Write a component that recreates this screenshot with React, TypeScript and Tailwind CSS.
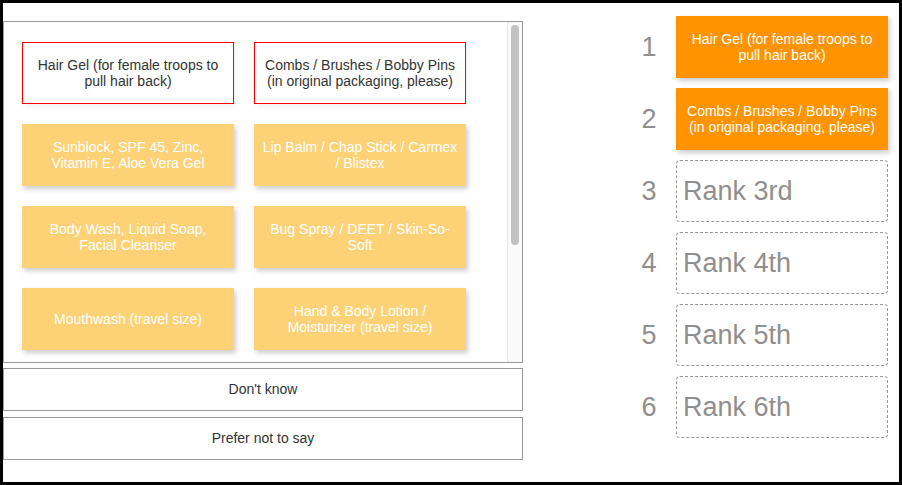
import React from "react";

const leftCards: { text: string; placed?: boolean }[] = [
  { text: "Hair Gel (for female troops to pull hair back)", placed: true },
  { text: "Combs / Brushes / Bobby Pins (in original packaging, please)", placed: true },
  { text: "Sunblock, SPF 45, Zinc, Vitamin E, Aloe Vera Gel" },
  { text: "Lip Balm / Chap Stick / Carmex / Blistex" },
  { text: "Body Wash, Liquid Soap, Facial Cleanser" },
  { text: "Bug Spray / DEET / Skin-So-Soft" },
  { text: "Mouthwash (travel size)" },
  { text: "Hand & Body Lotion / Moisturizer (travel size)" },
];

const ranks: { n: number; text: string; filled?: boolean }[] = [
  { n: 1, text: "Hair Gel (for female troops to pull hair back)", filled: true },
  { n: 2, text: "Combs / Brushes / Bobby Pins (in original packaging, please)", filled: true },
  { n: 3, text: "Rank 3rd" },
  { n: 4, text: "Rank 4th" },
  { n: 5, text: "Rank 5th" },
  { n: 6, text: "Rank 6th" },
];

export default function App() {
  return (
    <div
      className="w-[902px] h-[485px] border-[3px] border-black bg-white flex overflow-hidden"
      style={{ fontFamily: '"Liberation Sans", Arial, Helvetica, sans-serif' }}
    >
      {/* Left column */}
      <div className="w-[520px] shrink-0 pt-[18px] flex flex-col">
        <div className="h-[342px] border border-[#999] flex overflow-hidden">
          <div className="flex-1 overflow-hidden pl-[18px] pt-[20px]">
            <div className="grid grid-cols-[212px_212px] gap-x-[20px] gap-y-[20px]">
              {leftCards.map((c, i) =>
                c.placed ? (
                  <div
                    key={i}
                    className="h-[62px] border border-[#f00] bg-white text-[#333] text-[14px] leading-[16px] flex items-center justify-center text-center px-[8px] shadow-[2px_3px_5px_rgba(0,0,0,0.05)]"
                  >
                    {c.text}
                  </div>
                ) : (
                  <div
                    key={i}
                    className="h-[62px] bg-[#fdd276] text-white text-[14px] leading-[16px] flex items-center justify-center text-center px-[8px] shadow-[2px_3px_5px_rgba(0,0,0,0.2)]"
                  >
                    {c.text}
                  </div>
                )
              )}
            </div>
          </div>
          <div className="w-[15px] shrink-0 border-l border-[#e6e6e6] bg-[#fafafa]">
            <div className="ml-[3px] mt-[3px] w-[8px] h-[220px] rounded-[4px] bg-[#c2c2c2]" />
          </div>
        </div>
        <div className="mt-[5px] h-[43px] border border-[#999] flex items-center justify-center text-[14px] text-[#333]">
          Don't know
        </div>
        <div className="mt-[6px] h-[43px] border border-[#999] flex items-center justify-center text-[14px] text-[#333]">
          Prefer not to say
        </div>
      </div>

      {/* Right column */}
      <div className="ml-auto pr-[11px] pt-[13px] flex flex-col gap-[10px]">
        {ranks.map((r) => (
          <div key={r.n} className="flex items-center h-[62px]">
            <div className="w-[40px] text-center text-[27px] leading-none text-[#8f8f8f]">{r.n}</div>
            <div className="ml-[7px]">
              {r.filled ? (
                <div className="w-[212px] h-[62px] bg-[#ff9400] text-white text-[14px] leading-[16px] flex items-center justify-center text-center px-[8px] shadow-[2px_3px_5px_rgba(0,0,0,0.2)]">
                  {r.text}
                </div>
              ) : (
                <div className="w-[212px] h-[62px] border border-dashed border-[#9a9a9a] rounded-[4px] flex items-center pl-[6px] text-[27px] text-[#8f8f8f]">
                  {r.text}
                </div>
              )}
            </div>
          </div>
        ))}
      </div>
    </div>
  );
}
